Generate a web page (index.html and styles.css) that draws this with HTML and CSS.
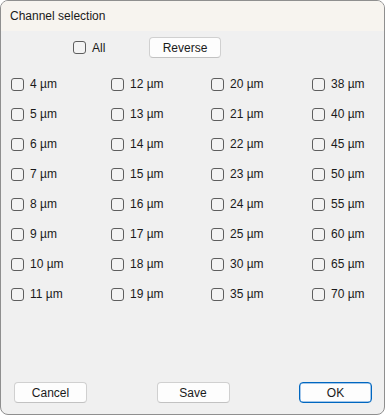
FILE: index.html
```html
<!DOCTYPE html>
<html>
<head>
<meta charset="utf-8">
<link rel="stylesheet" href="styles.css">
</head>
<body>
<div class="window">
  <div class="titlebar">Channel selection</div>
  <div class="toprow">
    <label class="check all"><span class="box"></span><span>All</span></label>
    <button class="btn reverse">Reverse</button>
  </div>
  <div class="grid">
    <label class="check"><span class="box"></span><span>4 µm</span></label>
    <label class="check"><span class="box"></span><span>12 µm</span></label>
    <label class="check"><span class="box"></span><span>20 µm</span></label>
    <label class="check"><span class="box"></span><span>38 µm</span></label>
    <label class="check"><span class="box"></span><span>5 µm</span></label>
    <label class="check"><span class="box"></span><span>13 µm</span></label>
    <label class="check"><span class="box"></span><span>21 µm</span></label>
    <label class="check"><span class="box"></span><span>40 µm</span></label>
    <label class="check"><span class="box"></span><span>6 µm</span></label>
    <label class="check"><span class="box"></span><span>14 µm</span></label>
    <label class="check"><span class="box"></span><span>22 µm</span></label>
    <label class="check"><span class="box"></span><span>45 µm</span></label>
    <label class="check"><span class="box"></span><span>7 µm</span></label>
    <label class="check"><span class="box"></span><span>15 µm</span></label>
    <label class="check"><span class="box"></span><span>23 µm</span></label>
    <label class="check"><span class="box"></span><span>50 µm</span></label>
    <label class="check"><span class="box"></span><span>8 µm</span></label>
    <label class="check"><span class="box"></span><span>16 µm</span></label>
    <label class="check"><span class="box"></span><span>24 µm</span></label>
    <label class="check"><span class="box"></span><span>55 µm</span></label>
    <label class="check"><span class="box"></span><span>9 µm</span></label>
    <label class="check"><span class="box"></span><span>17 µm</span></label>
    <label class="check"><span class="box"></span><span>25 µm</span></label>
    <label class="check"><span class="box"></span><span>60 µm</span></label>
    <label class="check"><span class="box"></span><span>10 µm</span></label>
    <label class="check"><span class="box"></span><span>18 µm</span></label>
    <label class="check"><span class="box"></span><span>30 µm</span></label>
    <label class="check"><span class="box"></span><span>65 µm</span></label>
    <label class="check"><span class="box"></span><span>11 µm</span></label>
    <label class="check"><span class="box"></span><span>19 µm</span></label>
    <label class="check"><span class="box"></span><span>35 µm</span></label>
    <label class="check"><span class="box"></span><span>70 µm</span></label>
  </div>
  <div class="bottom">
    <button class="btn">Cancel</button>
    <button class="btn">Save</button>
    <button class="btn ok">OK</button>
  </div>
</div>
</body>
</html>
```
FILE: styles.css
```css
html, body {
  margin: 0;
  padding: 0;
  background: #ffffff;
}
body {
  font-family: "Liberation Sans", Arial, sans-serif;
  font-size: 12px;
  color: #1a1a1a;
}
.window {
  width: 385px;
  height: 415px;
  box-sizing: border-box;
  border: 1px solid #8f8f8f;
  border-radius: 8px;
  overflow: hidden;
  background: #f0f0f0;
  display: flex;
  flex-direction: column;
}
.titlebar {
  height: 30px;
  line-height: 30px;
  padding-left: 9px;
  background: #f7f4ef;
  color: #1a1a1a;
}
.toprow {
  display: flex;
  align-items: center;
  padding-left: 72px;
  margin-top: 6px;
  height: 21px;
}
.check {
  display: flex;
  align-items: center;
  gap: 6px;
  white-space: nowrap;
}
.box {
  width: 13px;
  height: 13px;
  box-sizing: border-box;
  border: 1px solid #5e5e5e;
  border-radius: 3px;
  background: #f3f3f3;
  flex: none;
}
.all {
  width: 76px;
}
.btn {
  font-family: "Liberation Sans", Arial, sans-serif;
  font-size: 12px;
  color: #1a1a1a;
  background: #fdfdfd;
  border: 1px solid #d0d0d0;
  border-bottom-color: #c2c2c2;
  border-radius: 4px;
  height: 21px;
  width: 72px;
  padding: 0;
  box-sizing: border-box;
}
.grid {
  display: grid;
  grid-template-columns: 100px 100px 101px 70px;
  grid-auto-rows: 30px;
  align-items: center;
  padding-left: 10px;
  margin-top: 11px;
}
.bottom {
  margin-top: auto;
  display: flex;
  justify-content: space-between;
  padding: 0 12px 11px 13px;
}
.ok {
  width: 73px;
  border: 1px solid #0067c0;
  box-shadow: inset 0 0 0 0.5px #4a90d6;
}
.bottom .btn {
  width: 73px;
}
```
